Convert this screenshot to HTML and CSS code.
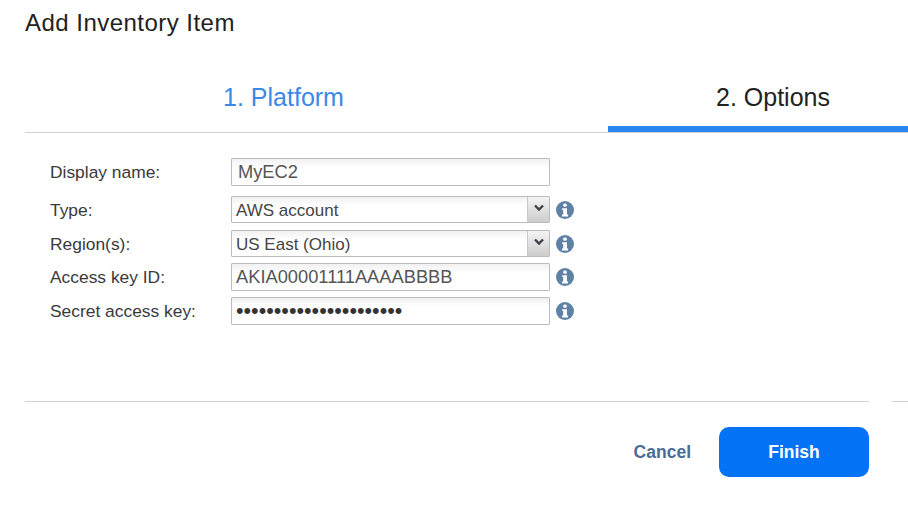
FILE: index.html
```html
<!DOCTYPE html>
<html lang="en">
<head>
<meta charset="utf-8">
<title>Add Inventory Item</title>
<link rel="stylesheet" href="styles.css">
</head>
<body>
<main class="dialog">
  <h1 class="title">Add Inventory Item</h1>
  <nav class="tabs">
    <div class="tab tab-done">1. Platform</div>
    <div class="tab tab-active">2. Options</div>
  </nav>
  <form class="form">
    <div class="row row-name">
      <label class="label">Display name:</label>
      <input class="field field-name" type="text" value="MyEC2">
    </div>
    <div class="row row-type">
      <label class="label">Type:</label>
      <div class="field select"><span class="select-text">AWS account</span><span class="arrow"><svg width="12" height="8" viewBox="0 0 12 8"><path d="M2 1.5 6 5.5 10 1.5" fill="none" stroke="#3c4248" stroke-width="2.4"/></svg></span></div>
      <svg class="info" viewBox="0 0 18 18"><circle cx="9" cy="9" r="9" fill="#5f81a6"/><rect x="7.2" y="2.6" width="3.6" height="3.2" rx="1.4" fill="#fff"/><path d="M6.2 7.2h4.8v6.2h1.1v2H6v-2h1.2V9.1h-1z" fill="#fff"/></svg>
    </div>
    <div class="row row-region">
      <label class="label">Region(s):</label>
      <div class="field select"><span class="select-text">US East (Ohio)</span><span class="arrow"><svg width="12" height="8" viewBox="0 0 12 8"><path d="M2 1.5 6 5.5 10 1.5" fill="none" stroke="#3c4248" stroke-width="2.4"/></svg></span></div>
      <svg class="info" viewBox="0 0 18 18"><circle cx="9" cy="9" r="9" fill="#5f81a6"/><rect x="7.2" y="2.6" width="3.6" height="3.2" rx="1.4" fill="#fff"/><path d="M6.2 7.2h4.8v6.2h1.1v2H6v-2h1.2V9.1h-1z" fill="#fff"/></svg>
    </div>
    <div class="row row-key">
      <label class="label">Access key ID:</label>
      <input class="field field-tight" type="text" value="AKIA00001111AAAABBBB">
      <svg class="info" viewBox="0 0 18 18"><circle cx="9" cy="9" r="9" fill="#5f81a6"/><rect x="7.2" y="2.6" width="3.6" height="3.2" rx="1.4" fill="#fff"/><path d="M6.2 7.2h4.8v6.2h1.1v2H6v-2h1.2V9.1h-1z" fill="#fff"/></svg>
    </div>
    <div class="row row-secret">
      <label class="label">Secret access key:</label>
      <input class="field field-tight field-secret" type="password" value="aaaaaaaaaaaaaaaaaaaaaa">
      <svg class="info" viewBox="0 0 18 18"><circle cx="9" cy="9" r="9" fill="#5f81a6"/><rect x="7.2" y="2.6" width="3.6" height="3.2" rx="1.4" fill="#fff"/><path d="M6.2 7.2h4.8v6.2h1.1v2H6v-2h1.2V9.1h-1z" fill="#fff"/></svg>
    </div>
  </form>
  <div class="rule"><span class="rule-long"></span><span class="rule-short"></span></div>
  <footer class="actions">
    <button class="btn-cancel" type="button">Cancel</button>
    <button class="btn-finish" type="button">Finish</button>
  </footer>
</main>
</body>
</html>
```
FILE: styles.css
```css
* { box-sizing: border-box; }
html, body { margin: 0; height: 100%; background: #fff; }
body { font-family: "Liberation Sans", Arial, sans-serif; overflow: hidden; }
.dialog { width: 908px; height: 506px; padding-left: 25px; display: flex; flex-direction: column; }
.title { margin: 0; padding-top: 9px; height: 66px; font-size: 24px; line-height: 28px; font-weight: 400; color: #222; letter-spacing: .47px; }
.tabs { display: flex; height: 67px; border-bottom: 1px solid #d0d0d4; }
.tab { font-size: 25px; line-height: 29px; padding-top: 17px; }
.tab-done { width: 583px; padding-right: 66px; text-align: center; color: #3b88e8; }
.tab-active { width: 300px; height: 66px; padding-left: 30px; text-align: center; color: #222; border-bottom: 6px solid #2b87f0; }
.form { padding: 25px 0 0 25px; height: 268px; }
.row { display: flex; align-items: center; }
.row-name { height: 28px; margin-bottom: 10px; }
.row-type { height: 27px; margin-bottom: 7px; }
.row-region { height: 27px; margin-bottom: 6px; }
.row-key { height: 28px; margin-bottom: 6px; }
.row-secret { height: 28px; }
.label { width: 181px; font-size: 17.4px; line-height: 28px; color: #3a3a3a; }
.field { width: 319px; height: 100%; border: 1px solid #bcbcc0; border-radius: 1px; background: linear-gradient(#f1f1f1, #fff 35%); font-family: inherit; font-size: 18.3px; color: #555; padding: 0 6px; margin: 0; outline: none; }
.field-tight { padding: 0 4px; }
.field-secret { color: #333; font-size: 21.6px; letter-spacing: 0; }
.select { display: flex; align-items: center; justify-content: space-between; padding: 0 0 0 4px; font-size: 17px; color: #444; }
.select-text { line-height: 1; padding-top: 1px; }
.arrow { width: 22px; height: 100%; display: flex; align-items: center; justify-content: center; border-left: 1px solid #c8c8c8; background: linear-gradient(#f4f4f4, #cdcdcd); padding-bottom: 3px; }
.info { width: 18px; height: 18px; margin-left: 6px; flex: none; }
.rule { display: flex; height: 1px; }
.rule-long { width: 844px; background: #d0d0d8; }
.rule-short { width: 16px; margin-left: 23px; background: #d0d0d8; }
.actions { display: flex; justify-content: flex-end; align-items: center; padding: 25px 39px 0 0; }
.btn-cancel { border: 0; background: none; padding: 0; margin-right: 28px; font: 700 17.5px "Liberation Sans", Arial, sans-serif; color: #4a6c96; }
.btn-finish { width: 150px; height: 50px; border: 0; border-radius: 10px; background: #0573f5; color: #fff; font: 700 17.5px "Liberation Sans", Arial, sans-serif; }
```
